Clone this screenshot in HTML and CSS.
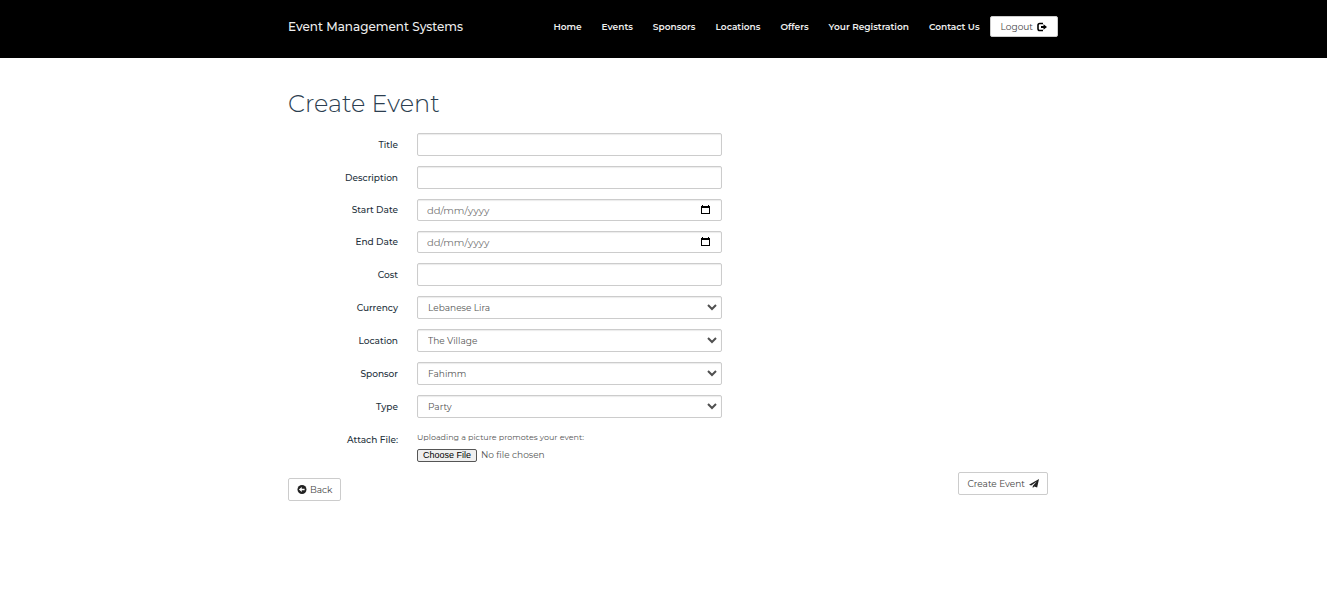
FILE: index.html
```html
<!DOCTYPE html>
<html lang="en-GB">
<head>
<meta charset="utf-8">
<meta name="viewport" content="width=device-width, initial-scale=1">
<title>Create Event</title>
<link rel="stylesheet" href="styles.css">
</head>
<body>
<header class="navbar">
  <div class="container navbar-inner">
    <a class="brand" href="#">Event Management Systems</a>
    <nav class="nav">
      <a href="#">Home</a>
      <a href="#">Events</a>
      <a href="#">Sponsors</a>
      <a href="#">Locations</a>
      <a href="#">Offers</a>
      <a href="#">Your Registration</a>
      <a href="#">Contact Us</a>
    </nav>
    <button class="btn btn-logout" type="button">Logout
      <svg class="icon" viewBox="0 0 20 20" aria-hidden="true"><path d="M12 3H5.500A3.500 3.500 0 0 0 2 6.500v7A3.500 3.500 0 0 0 5.500 17H12" fill="none" stroke="#000" stroke-width="3.200"/><path d="M8 8.200h5V4.500l7 5.500-7 5.500v-3.700H8z" fill="#000"/></svg>
    </button>
  </div>
</header>
<main class="container">
  <h1 class="title">Create Event</h1>
  <form class="form">
    <div class="row"><label for="title">Title</label><input class="control" id="title" type="text"></div>
    <div class="row"><label for="description">Description</label><input class="control" id="description" type="text"></div>
    <div class="row"><label for="start">Start Date</label>
      <div class="field"><input class="control date" id="start" type="text" placeholder="dd/mm/yyyy">
        <button class="picker" type="button" aria-label="Choose start date"><svg viewBox="0 0 9 9" aria-hidden="true"><path d="M0 1h1V0h1v1h5V0h1v1h1v8H0zM1 3v5h7V3z" fill="#000" fill-rule="evenodd"/></svg></button></div></div>
    <div class="row"><label for="end">End Date</label>
      <div class="field"><input class="control date" id="end" type="text" placeholder="dd/mm/yyyy">
        <button class="picker" type="button" aria-label="Choose end date"><svg viewBox="0 0 9 9" aria-hidden="true"><path d="M0 1h1V0h1v1h5V0h1v1h1v8H0zM1 3v5h7V3z" fill="#000" fill-rule="evenodd"/></svg></button></div></div>
    <div class="row"><label for="cost">Cost</label><input class="control" id="cost" type="text"></div>
    <div class="row"><label for="currency">Currency</label>
      <div class="field"><select class="control select" id="currency"><option>Lebanese Lira</option></select>
        <svg class="chevron" viewBox="0 0 10 7" aria-hidden="true"><path d="M1 1l4 4 4-4" fill="none" stroke="#505050" stroke-width="2"/></svg></div></div>
    <div class="row"><label for="location">Location</label>
      <div class="field"><select class="control select" id="location"><option>The Village</option></select>
        <svg class="chevron" viewBox="0 0 10 7" aria-hidden="true"><path d="M1 1l4 4 4-4" fill="none" stroke="#505050" stroke-width="2"/></svg></div></div>
    <div class="row"><label for="sponsor">Sponsor</label>
      <div class="field"><select class="control select" id="sponsor"><option>Fahimm</option></select>
        <svg class="chevron" viewBox="0 0 10 7" aria-hidden="true"><path d="M1 1l4 4 4-4" fill="none" stroke="#505050" stroke-width="2"/></svg></div></div>
    <div class="row"><label for="type">Type</label>
      <div class="field"><select class="control select" id="type"><option>Party</option></select>
        <svg class="chevron" viewBox="0 0 10 7" aria-hidden="true"><path d="M1 1l4 4 4-4" fill="none" stroke="#505050" stroke-width="2"/></svg></div></div>
    <div class="row"><label for="file">Attach File:</label>
      <div class="upload"><p class="hint">Uploading a picture promotes your event:</p><input class="file" id="file" type="file"></div></div>
    <div class="actions">
      <button class="btn btn-back" type="button"><svg class="icon" viewBox="0 0 18 18" aria-hidden="true"><circle cx="9" cy="9" r="9" fill="#222"/><path d="M2.800 9l5.700-5v3.300h5.700v3.400H8.500V14z" fill="#fff"/></svg>
        Back</button>
      <button class="btn" type="submit">Create Event
        <svg class="icon" viewBox="0 0 20 18" aria-hidden="true"><path d="M20 0L0 11.500l4.500 1.600L15.500 5 7.500 14v4l3-3 5.800 2z" fill="#222"/></svg></button>
    </div>
  </form>
</main>
</body>
</html>
```
FILE: styles.css
```css
* { box-sizing: border-box; }

body {
  margin: 0;
  background: #fff;
  color: #2c3e50;
  font: 9px/15px Montserrat, Inter, sans-serif;
}

button, input, select { font: inherit; }

.container {
  max-width: 771px;
  margin: 0 auto;
  padding: 0 1px 0 10px;
}

.navbar {
  padding: 16px 0 21px;
  background: #000;
}

.navbar-inner {
  display: flex;
  align-items: center;
}

.navbar a {
  color: #eee;
  text-decoration: none;
  white-space: nowrap;
}

.navbar .brand {
  margin-right: auto;
  font-size: 12px;
  font-weight: 500;
}

.nav {
  display: flex;
  gap: 20px;
  margin-right: 10px;
  font-weight: 600;
}

.btn {
  display: inline-flex;
  align-items: center;
  gap: 4px;
  height: 23px;
  padding: 0 8px;
  border: 1px solid #ccc;
  border-radius: 2px;
  background: #fff;
  color: #444;
  white-space: nowrap;
}

.btn-logout {
  height: 21px;
  margin-right: -10px;
  padding: 0 10px;
}

.icon {
  width: 10px;
  height: 9px;
}

.btn-logout .icon { height: 10px; }

.title {
  margin: 32px 0 16px;
  font-size: 24px;
  font-weight: 300;
  line-height: 27px;
}

.form {
  display: flex;
  flex-direction: column;
  gap: 10px;
}

.row {
  display: grid;
  grid-template-columns: 110px minmax(0, 305px);
  column-gap: 19px;
}

.row label {
  color: #222f3a;
  font-weight: 600;
  font-weight: 500;
  line-height: 23px;
  text-align: right;
}

.row:has(.date) label { line-height: 22px; }

.control {
  width: 100%;
  height: 23px;
  padding: 0 10px;
  border: 1px solid #ccc;
  border-radius: 2px;
  background: #fff;
  color: #555;
  box-shadow: inset 0 1px 1px rgba(0, 0, 0, .08);
}

.date {
  height: 22px;
  padding: 0 9px;
  font-size: 10px;
}

.control::placeholder { color: #757575; opacity: 1; }

.field {
  display: grid;
  align-items: center;
}

.field > * { grid-area: 1 / 1; }

.select { appearance: none; }

.chevron {
  width: 10px;
  height: 7px;
  margin-right: 5px;
  justify-self: end;
  pointer-events: none;
}

.picker {
  display: flex;
  justify-self: end;
  margin-right: 12px;
  padding: 0 0 1px;
  border: 0;
  background: none;
}

.picker svg {
  width: 9px;
  height: 9px;
}

.hint {
  margin: 2px 0 3px;
  color: #555;
  font-size: 8px;
  line-height: 15px;
}

.file {
  display: block;
  width: 100%;
  height: 14px;
  color: #555;
  line-height: 13px;
}

.file::file-selector-button {
  height: 13px;
  margin: 0 4px 0 0;
  padding: 0 5px;
  border: 1px solid #555;
  border-radius: 2px;
  background: #efefef;
  color: #000;
  font: 9px/11px "Liberation Sans", Arial, sans-serif;
}

.actions {
  display: flex;
  justify-content: space-between;
  align-items: flex-start;
}

.btn-back {
  gap: 3px;
  margin-top: 6px;
}
```
